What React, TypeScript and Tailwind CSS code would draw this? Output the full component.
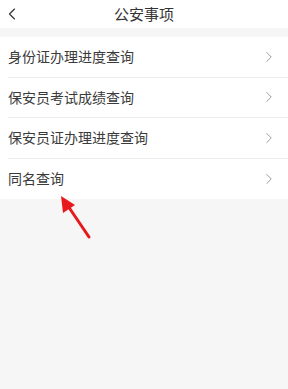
import { ChevronLeft, ChevronRight } from 'lucide-react';

const ITEMS = ['身份证办理进度查询', '保安员考试成绩查询', '保安员证办理进度查询', '同名查询'];

export default function App() {
  return (
    <div
      className="relative w-[288px] h-[389px] bg-[#f6f6f6] overflow-hidden"
      style={{ fontFamily: '"Noto Sans CJK SC", "Noto Sans", sans-serif' }}
    >
      <div className="h-[28px] bg-white flex items-center relative">
        <ChevronLeft className="w-[20px] h-[20px] text-[#333] ml-[2px]" strokeWidth={1.4} />
        <div className="absolute inset-0 flex items-center justify-center text-[15px] text-[#333]">公安事项</div>
      </div>
      <div className="mt-[9px] bg-white">
        {ITEMS.map((t, i) => (
          <div key={t} className="pl-2">
            <div
              className={
                'h-[40.5px] flex items-center justify-between pr-[10px] ' +
                (i < ITEMS.length - 1 ? 'border-b border-[#ececec]' : '')
              }
            >
              <span className="text-[14px] text-[#3a3a3a]">{t}</span>
              <ChevronRight className="w-[18px] h-[18px] text-[#9a9a9a]" strokeWidth={1.3} />
            </div>
          </div>
        ))}
      </div>
      <svg className="absolute left-0 top-0" width="288" height="389">
        <line x1="89" y1="237" x2="68" y2="206" stroke="#e8191c" strokeWidth="3" strokeLinecap="round" />
        <polygon points="61,196 75,205 63,213" fill="#e8191c" />
      </svg>
    </div>
  );
}
